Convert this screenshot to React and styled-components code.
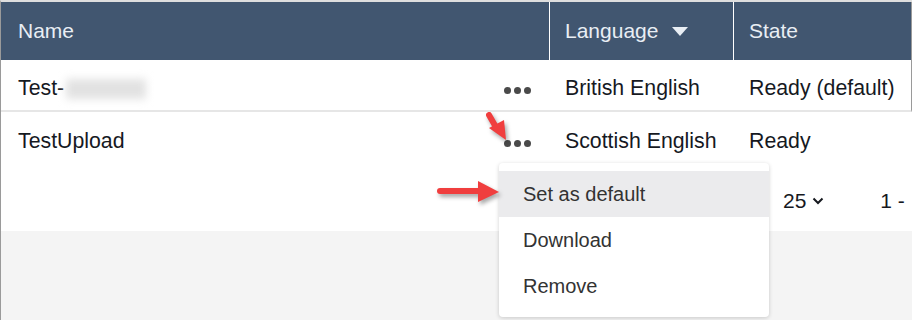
import styled, { createGlobalStyle } from "styled-components";

const Global = createGlobalStyle`
  html, body { margin: 0; padding: 0; background: #f4f4f4; }
  body { font-family: Arial, "Liberation Sans", sans-serif; }
`

const Page = styled.div`
  position: relative;
  width: 912px;
  height: 320px;
  overflow: hidden;
  border-left: 1px solid #9a9a9a;
  border-top: 2px solid #dedede;
  box-sizing: border-box;
  background: #f4f4f4;
`
const Panel = styled.div`
  background: #fff;
  width: 911px;
`
const Row = styled.div`
  display: grid;
  grid-template-columns: 548px 184px 1fr;
  height: ${(p) => p.h}px;
  box-sizing: border-box;
  border-bottom: ${(p) => (p.line ? "2px solid #e6e6e6" : "none")};
  border-right: ${(p) => (p.edge ? "1px solid #9a9a9a" : "none")};
`
const HeadRow = styled(Row)`
  background: #415670;
  color: #e9eef4;
`
const HeadCell = styled.div`
  display: flex;
  align-items: center;
  padding-left: ${(p) => (p.first ? 17 : 15)}px;
  font-size: 21px;
  border-left: ${(p) => (p.first ? "none" : "1px solid #ffffff")};
  gap: 14px;
`
const Cell = styled.div`
  display: flex;
  align-items: center;
  padding: 7px 18px 0 ${(p) => (p.first ? 17 : 16)}px;
  font-size: 21.3px;
  color: #16191f;
  justify-content: ${(p) => (p.spread ? "space-between" : "flex-start")};
  white-space: nowrap;
`
const Blur = styled.span`
  display: inline-block;
  width: 80px;
  height: 20px;
  margin-left: 2px;
  background: #e2e2e2;
  filter: blur(4px);
  vertical-align: middle;
`
const Dots = styled.span`
  display: flex;
  gap: 3px;
  padding-top: 4px;
  span {
    width: 7px;
    height: 7px;
    border-radius: 50%;
    background: #4a4a4a;
  }
`
const Pager = styled.div`
  height: 67px;
  display: flex;
  align-items: center;
  padding: 7px 0 0 782px;
  box-sizing: border-box;
  gap: 56px;
  font-size: 21px;
  color: #16191f;
`
const PageSize = styled.span`
  display: flex;
  align-items: center;
  gap: 6px;
`
const Menu = styled.div`
  position: absolute;
  left: 498px;
  top: 161px;
  width: 270px;
  padding: 8px 0;
  background: #fff;
  border-radius: 4px;
  box-shadow: 0 1px 4px rgba(0, 0, 0, 0.18);
`
const MenuItem = styled.div`
  height: 46px;
  display: flex;
  align-items: center;
  padding-left: 24px;
  font-size: 20px;
  color: #333;
  background: ${(p) => (p.active ? "#ebebed" : "#fff")};
`
const Arrow = styled.svg`
  position: absolute;
  left: ${(p) => p.x}px;
  top: ${(p) => p.y}px;
  overflow: visible;
  filter: drop-shadow(2px 3px 2px rgba(0, 0, 0, 0.35));
`

function Caret() {
  return (
    <svg width="16" height="9" viewBox="0 0 16 9">
      <path d="M0 0 L16 0 L8 9 Z" fill="#e9eef4" />
    </svg>
  );
}

function Chevron() {
  return (
    <svg width="12" height="8" viewBox="0 0 12 8">
      <path d="M1.5 1.5 L6 6 L10.5 1.5" fill="none" stroke="#16191f" strokeWidth="2" />
    </svg>
  );
}

function More() {
  return (
    <Dots>
      <span />
      <span />
      <span />
    </Dots>
  );
}

export default function App() {
  return (
    <>
      <Global />
      <Page>
        <Panel>
          <HeadRow h={58} edge>
            <HeadCell first>Name</HeadCell>
            <HeadCell>
              Language <Caret />
            </HeadCell>
            <HeadCell>State</HeadCell>
          </HeadRow>
          <Row h={52} line edge>
            <Cell first spread>
              <span>
                Test-<Blur />
              </span>
              <More />
            </Cell>
            <Cell>British English</Cell>
            <Cell>Ready (default)</Cell>
          </Row>
          <Row h={52}>
            <Cell first spread>
              <span>TestUpload</span>
              <More />
            </Cell>
            <Cell>Scottish English</Cell>
            <Cell>Ready</Cell>
          </Row>
          <Pager>
            <PageSize>
              25 <Chevron />
            </PageSize>
            <span>1 -</span>
          </Pager>
        </Panel>
        <Menu>
          <MenuItem active>Set as default</MenuItem>
          <MenuItem>Download</MenuItem>
          <MenuItem>Remove</MenuItem>
        </Menu>
        <Arrow x={485} y={110} width="24" height="30" viewBox="0 0 24 30">
          <path d="M3 3 L11 17" stroke="#f03e3e" strokeWidth="6" strokeLinecap="round" />
          <path d="M3 16 L20 28 L18 8 Z" fill="#f03e3e" />
        </Arrow>
        <Arrow x={436} y={178} width="64" height="24" viewBox="0 0 64 24">
          <path d="M3 11 L44 11" stroke="#f03e3e" strokeWidth="6" strokeLinecap="round" />
          <path d="M41 1 L62 12 L41 22 Z" fill="#f03e3e" />
        </Arrow>
      </Page>
    </>
  );
}
